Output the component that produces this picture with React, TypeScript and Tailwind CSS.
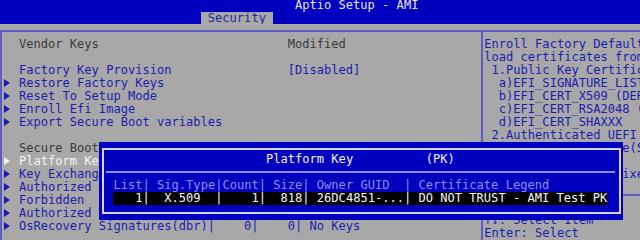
import React from "react";

const sp = (n: number) => " ".repeat(n);

function Arrow({ white }: { white?: boolean }) {
  return (
    <span className="inline-flex w-[7.27px] h-[13px] items-center justify-start shrink-0">
      <svg width="6" height="8" viewBox="0 0 6 8" className="ml-[0px]">
        <polygon points="0,0 6,4 0,8" fill={white ? "#f0f0f0" : "#1c1cb0"} />
      </svg>
    </span>
  );
}

function Row({
  text = "",
  arrow,
  tone = "blue",
}: {
  text?: string;
  arrow?: boolean;
  tone?: "blue" | "dark" | "white";
}) {
  const color =
    tone === "blue"
      ? "text-[#1c1cb0]"
      : tone === "dark"
      ? "text-[#3a3a3a]"
      : "text-[#f4f4f4]";
  return (
    <div className={`h-[13px] flex whitespace-pre ${color}`}>
      {arrow ? <Arrow white={tone === "white"} /> : <span className="w-[7.27px] shrink-0" />}
      <span>{text}</span>
    </div>
  );
}

export default function App() {
  return (
    <div className="relative w-[640px] h-[240px] overflow-hidden bg-[#a8a8a8] font-['DejaVu_Sans_Mono','Liberation_Mono',monospace] text-[12.075px] leading-[13px]">
      {/* header */}
      <div className="h-[24px] bg-[#0000be] overflow-hidden">
        <div className="-mt-[1.5px] pl-[4.46px]">
          <div className="h-[13px] whitespace-pre text-[#e4e4e4]">
            {sp(40) + "Aptio Setup - AMI"}
          </div>
          <div className="h-[13px] whitespace-pre flex">
            <span>{sp(27)}</span>
            <span className="bg-[#a8a8a8] text-[#2424a0] h-[13px]">{" Security "}</span>
          </div>
        </div>
      </div>

      {/* body */}
      <div className="pt-[6px]">
        <div className="flex border-t-2 border-l-2 border-[#5c5cc4] h-[210px]">
          {/* left panel */}
          <div className="w-[479px] shrink-0 pl-[2.46px] pt-[5.5px] overflow-hidden">
            <Row tone="dark" text={" Vendor Keys" + sp(26) + "Modified"} />
            <Row />
            <Row text={" Factory Key Provision" + sp(16) + "[Disabled]"} />
            <Row arrow text=" Restore Factory Keys" />
            <Row arrow text=" Reset To Setup Mode" />
            <Row arrow text=" Enroll Efi Image" />
            <Row arrow text=" Export Secure Boot variables" />
            <Row />
            <Row tone="dark" text=" Secure Boot variable  |  Size| Keys| Key Source" />
            <Row arrow tone="white" text=" Platform Key(PK)     |   818|    1| Factory" />
            <Row arrow text=" Key Exchange Keys    |  1560|    1| Factory" />
            <Row arrow text=" Authorized Signatures|  3143|    2| Factory" />
            <Row arrow text=" Forbidden  Signatures|  3724|   77| Factory" />
            <Row arrow text=" Authorized TimeStamps|     0|    0| No Keys" />
            <Row arrow text=" OsRecovery Signatures(dbr)|    0|    0| No Keys" />
          </div>
          {/* divider */}
          <div className="w-[2px] shrink-0 bg-[#5c5cc4]" />
          {/* right panel */}
          <div className="flex-1 flex flex-col overflow-hidden text-[#1c1cb0]">
            <div className="h-[167px] pt-[5.5px] pl-[1.28px] whitespace-pre">
              <div className="h-[13px]">Enroll Factory Default keys or</div>
              <div className="h-[13px]">load certificates from a file:</div>
              <div className="h-[13px]"> 1.Public Key Certificate in:</div>
              <div className="h-[13px]">  a)EFI_SIGNATURE_LIST</div>
              <div className="h-[13px]">  b)EFI_CERT_X509 (DER)</div>
              <div className="h-[13px]">  c)EFI_CERT_RSA2048 (bin)</div>
              <div className="h-[13px]">  d)EFI_CERT_SHAXXX</div>
              <div className="h-[13px]"> 2.Authenticated UEFI Variable</div>
              <div className="h-[13px]"> 3.EFI PE/COFF Image(SHA256)</div>
              <div className="h-[13px]">Key Source:</div>
              <div className="h-[13px]"> Factory,External,Mixed</div>
            </div>
            <div className="border-t-2 border-[#5c5cc4] pt-[5.5px] pl-[1.28px] whitespace-pre">
              <div className="h-[13px]">{"\u2192\u2190: Select Screen"}</div>
              <div className="h-[13px]">{"\u2191\u2193: Select Item"}</div>
              <div className="h-[13px]">Enter: Select</div>
            </div>
          </div>
        </div>
      </div>

      {/* popup */}
      <div className="absolute left-[98.5px] top-[141.5px] w-[524.5px] h-[78px] bg-[#0000be]">
        <div className="mt-[6.5px] ml-[3.2px] mr-[2px] h-[65.5px] border-2 border-[#d4d4f4] pt-[2.5px] whitespace-pre">
          <div className="h-[13px] pl-[9.81px] text-[#f4f4f4]">
            {sp(21) + "Platform Key" + sp(10) + "(PK)"}
          </div>
          <div className="h-[13px] pl-[2.54px] pt-[5.5px]">
            <div className="w-[509px] h-[2px] bg-[#8c8ce4]" />
          </div>
          <div className="h-[13px] pl-[9.81px] text-[#8e8ef4]">
            {"List| Sig.Type|Count| Size| Owner GUID  | Certificate Legend"}
          </div>
          <div className="h-[13px] pl-[9.81px] flex">
            <span className="bg-black text-[#f4f4f4] h-[13px]">
              {"   1|  X.509  |    1|  818| 26DC4851-...| DO NOT TRUST - AMI Test PK"}
            </span>
          </div>
        </div>
      </div>
    </div>
  );
}
